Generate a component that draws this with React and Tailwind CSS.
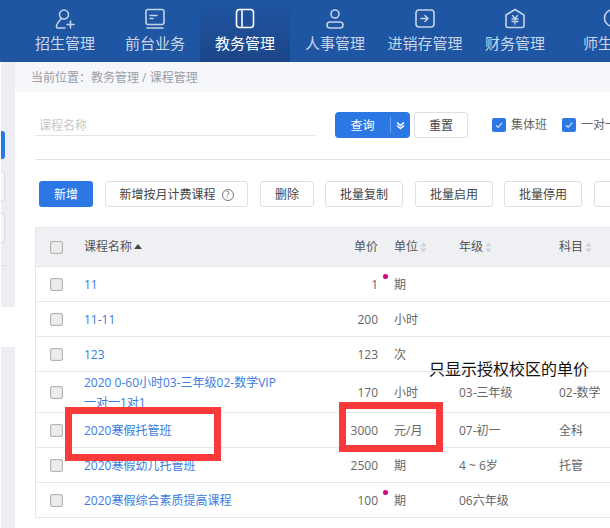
import React from "react";

const font = { fontFamily: '"Open Sans", "Noto Sans CJK SC", "Liberation Sans", sans-serif' };

const navItems = [
    { label: "招生管理", icon: "recruit" },
    { label: "前台业务", icon: "desk" },
    { label: "教务管理", icon: "book", active: true },
    { label: "人事管理", icon: "person" },
    { label: "进销存管理", icon: "stock" },
    { label: "财务管理", icon: "money" },
];

const rows = [
    { name: "11", price: "1", unit: "期", dot: true },
    { name: "11-11", price: "200", unit: "小时" },
    { name: "123", price: "123", unit: "次" },
    { name: "2020 0-60小时03-三年级02-数学VIP 一对一1对1", price: "170", unit: "小时", grade: "03-三年级", subject: "02-数学", tall: true },
    { name: "2020寒假托管班", price: "3000", unit: "元/月", grade: "07-初一", subject: "全科" },
    { name: "2020寒假幼儿托管班", price: "2500", unit: "期", grade: "4 ~ 6岁", subject: "托管" },
    { name: "2020寒假综合素质提高课程", price: "100", unit: "期", grade: "06六年级", dot: true },
];

const NavIcon = ({ type, active }) => {
    const stroke = active ? "#ffffff" : "#c3d2e8";
    return (
        <svg width="22" height="22" viewBox="0 0 22 22" fill="none" stroke={stroke} strokeWidth="1.6" strokeLinecap="round" strokeLinejoin="round">
            {type === "recruit" && (
                <>
                    <circle cx="10" cy="6.5" r="4.5" />
                    <path d="M7.5 10.5 C5 13 3 15 2.5 18 a1.5 1.5 0 0 0 1.5 2 H11" />
                    <path d="M13 16.5 h7 M16.5 13 v7" />
                </>
            )}
            {type === "desk" && (
                <>
                    <rect x="2" y="1.5" width="18" height="15" rx="2" />
                    <path d="M6 7.5 h7 M6 10.5 h3" />
                    <path d="M3 20 h16" />
                </>
            )}
            {type === "book" && (
                <>
                    <rect x="2.5" y="1.5" width="17" height="18" rx="3" />
                    <path d="M8 1.5 v18" />
                </>
            )}
            {type === "person" && (
                <>
                    <circle cx="11" cy="6" r="4" />
                    <rect x="3" y="14" width="16" height="6" rx="3" />
                </>
            )}
            {type === "stock" && (
                <>
                    <rect x="2" y="2" width="18" height="17" rx="3" />
                    <path d="M7 10.5 h7 M11 7.5 l3 3 -3 3" />
                </>
            )}
            {type === "money" && (
                <>
                    <path d="M11 1.5 L20 7 V17.5 a2 2 0 0 1 -2 2 H4 a2 2 0 0 1 -2 -2 V7 Z" />
                    <path d="M8.5 7.5 L11 10.5 L13.5 7.5 M8 11 h6 M8 13.5 h6 M11 10.5 v5.5" strokeWidth="1.3" />
                </>
            )}
            {type === "teacher" && (
                <>
                    <circle cx="11" cy="10" r="8.5" />
                    <path d="M9 15 h6" />
                </>
            )}
        </svg>
    );
};

const SortArrows = () => (
    <svg width="7" height="11" viewBox="0 0 7 11" className="ml-[2px] mt-[1px]" fill="#cfd2d8">
        <path d="M3.5 0.5 L6.8 4.5 H0.2 Z" />
        <path d="M3.5 10.5 L6.8 6.5 H0.2 Z" />
    </svg>
);

const Checkbox = () => (
    <span className="block h-[13px] w-[13px] rounded-[2px] border border-[#b5b5b5] bg-[#ececec] shadow-[inset_0_0_1px_#999]" />
);

const BlueCheck = () => (
    <span className="flex h-[14px] w-[14px] items-center justify-center rounded-[2px] bg-[#2b78e4]">
        <svg width="10" height="10" viewBox="0 0 10 10" fill="none" stroke="#cfe0f8" strokeWidth="1.3">
            <path d="M2 5.2 L4.2 7.4 L8.2 2.6" />
        </svg>
    </span>
);

const ToolButton = ({ className, children }) => (
    <button className={`flex h-[26px] shrink-0 items-center justify-center rounded-[3px] border border-[#dcdfe6] bg-white pt-px text-[12px] text-[#444] ${className}`}>
        {children}
    </button>
);

const App = () => {
    return (
        <div style={font} className="relative h-[528px] w-[610px] overflow-hidden bg-white">
            {/* 상단 내비게이션 */}
            <div className="flex h-[62px] bg-[#1f56a3] pl-[20px]">
                {navItems.map((item) => (
                    <div
                        key={item.label}
                        className={`flex w-[90px] shrink-0 flex-col items-center whitespace-nowrap pt-[8px] ${item.active ? "bg-gradient-to-b from-[#1f56a3] to-[#1c4587] text-white" : "text-[#c9d6ea]"}`}
                    >
                        <NavIcon type={item.icon} active={item.active} />
                        <span className="mt-[1px] text-[15px] leading-[24px]">{item.label}</span>
                    </div>
                ))}
                <div className="ml-[8px] flex w-[90px] shrink-0 flex-col items-center whitespace-nowrap pt-[8px] text-[#c9d6ea]">
                    <NavIcon type="teacher" />
                    <span className="mt-[1px] text-[15px] leading-[24px]">师生管理</span>
                </div>
            </div>

            <div className="flex h-[466px]">
                {/* 왼쪽 사이드 */}
                <div className="flex w-[15px] shrink-0 flex-col pl-[1px]">
                    <div className="h-[245px] bg-[#eceef3]">
                        <div className="mt-[69px] h-[28px] w-[4px] rounded-r-[3px] bg-[#2b78e4]" />
                        <div className="mt-[12px] h-[30px] w-[4px] rounded-r-[3px] border border-l-0 border-[#d8dbe2] bg-[#f6f7fa]" />
                        <div className="mt-[12px] h-[30px] w-[4px] rounded-r-[3px] border border-l-0 border-[#d8dbe2] bg-[#f6f7fa]" />
                        <div className="mt-[22px] h-px w-[4px] bg-[#d8dbe2]" />
                    </div>
                    <div className="h-[40px] bg-white" />
                    <div className="flex-1 bg-[#eceef3]" />
                </div>

                <div className="min-w-0 flex-1">
                    {/* 현재 위치 */}
                    <div className="h-[30px] bg-[#f5f7fb] pl-[16px] text-[12px] leading-[32px] text-[#9b9ea6]">
                        当前位置：教务管理 / 课程管理
                    </div>

                    <div className="pl-[20px]">
                        {/* 검색 영역 */}
                        <div className="flex h-[68px] w-[595px] items-start border-b border-[#dfe1e6] pt-[20px]">
                            <div className="h-[24px] w-[280px] shrink-0 border-b border-[#e2e4e9] pl-[4px] text-[12px] leading-[28px] text-[#c8c8c8]">
                                课程名称
                            </div>
                            <div className="ml-[20px] flex h-[26px] w-[75px] shrink-0 items-center rounded-[4px] bg-[#2b78e4] text-[12px] text-white">
                                <span className="w-[55px] pt-px text-center">查询</span>
                                <span className="flex h-[16px] flex-1 items-center justify-center border-l border-[#6ba0ec]">
                                    <svg width="9" height="9" viewBox="0 0 9 9" fill="none" stroke="#ffffff" strokeWidth="1.6">
                                        <path d="M1 1.5 L4.5 4.5 L8 1.5 M1 4.5 L4.5 7.5 L8 4.5" />
                                    </svg>
                                </span>
                            </div>
                            <ToolButton className="ml-[4px] w-[54px]">重置</ToolButton>
                            <div className="ml-[24px] flex h-[26px] shrink-0 items-center text-[12px] text-[#666]">
                                <BlueCheck />
                                <span className="ml-[5px]">集体班</span>
                            </div>
                            <div className="ml-[15px] flex h-[26px] shrink-0 items-center whitespace-nowrap text-[12px] text-[#666]">
                                <BlueCheck />
                                <span className="ml-[5px]">一对一</span>
                            </div>
                        </div>

                        {/* 버튼 줄 */}
                        <div className="mt-[21px] flex h-[26px] pl-[4px]">
                            <button className="flex h-[26px] w-[54px] shrink-0 items-center justify-center rounded-[3px] bg-[#2b78e4] pt-px text-[12px] text-white">新增</button>
                            <ToolButton className="ml-[12px] w-[143px]">
                                新增按月计费课程
                                <span className="ml-[6px] flex h-[12px] w-[12px] items-center justify-center rounded-full border border-[#777] text-[9px] leading-none text-[#777]">?</span>
                            </ToolButton>
                            <ToolButton className="ml-[12px] w-[54px]">删除</ToolButton>
                            <ToolButton className="ml-[11px] w-[78px]">批量复制</ToolButton>
                            <ToolButton className="ml-[12px] w-[78px]">批量启用</ToolButton>
                            <ToolButton className="ml-[11px] w-[78px]">批量停用</ToolButton>
                            <ToolButton className="ml-[12px] w-[78px]" />
                        </div>

                        {/* 테이블 */}
                        <div className="mt-[20px] w-[595px] border-l border-[#e4e6ec] text-[12px]">
                            <div className="flex h-[40px] items-center border-y border-[#e4e6ec] bg-[#eff0f4] text-[#555]">
                                <div className="w-[48px] shrink-0 pl-[14px]"><Checkbox /></div>
                                <div className="flex w-[200px] shrink-0 items-center">
                                    课程名称
                                    <svg width="8" height="5" viewBox="0 0 8 5" className="ml-[2px] mb-[2px]" fill="#444"><path d="M4 0 L8 5 H0 Z" /></svg>
                                </div>
                                <div className="w-[94px] shrink-0 text-right">单价</div>
                                <div className="flex w-[65px] shrink-0 items-center pl-[16px]">单位<SortArrows /></div>
                                <div className="flex w-[100px] shrink-0 items-center pl-[16px]">年级<SortArrows /></div>
                                <div className="flex shrink-0 items-center pl-[16px]">科目<SortArrows /></div>
                            </div>
                            {rows.map((row) => (
                                <div key={row.name} className={`flex items-center border-b border-[#e4e6ec] text-[#666] ${row.tall ? "h-[41px]" : "h-[35px]"}`}>
                                    <div className="w-[48px] shrink-0 pl-[14px]"><Checkbox /></div>
                                    <div className="w-[200px] shrink-0 pt-px leading-[20px] text-[#3a7ce0]">
                                        {row.tall ? (
                                            <>
                                                <div className="whitespace-nowrap">2020 0-60小时03-三年级02-数学VIP</div>
                                                <div>一对一1对1</div>
                                            </>
                                        ) : (
                                            <span className="whitespace-nowrap">{row.name}</span>
                                        )}
                                    </div>
                                    <div className="relative w-[94px] shrink-0 pt-px text-right">
                                        {row.price}
                                        {row.dot && <span className="absolute -right-[10px] -top-px h-[5px] w-[5px] rounded-full bg-[#d6007f]" />}
                                    </div>
                                    <div className="w-[65px] shrink-0 pl-[16px] pt-px">{row.unit}</div>
                                    <div className="w-[100px] shrink-0 pl-[16px] pt-px">{row.grade}</div>
                                    <div className="shrink-0 whitespace-nowrap pl-[16px] pt-px">{row.subject}</div>
                                </div>
                            ))}
                        </div>
                    </div>
                </div>
            </div>

            {/* 스크린샷 위 주석 */}
            <div className="absolute left-[65px] top-[407px] h-[54px] w-[156px] border-[7px] border-[#fa3a3a]" />
            <div className="absolute left-[339px] top-[402px] h-[50px] w-[104px] border-[7px] border-[#fa3a3a]" />
            <div className="absolute left-[429px] top-[357px] text-[16px] leading-[24px] text-[#111]">只显示授权校区的单价</div>
        </div>
    );
};

export default App;
